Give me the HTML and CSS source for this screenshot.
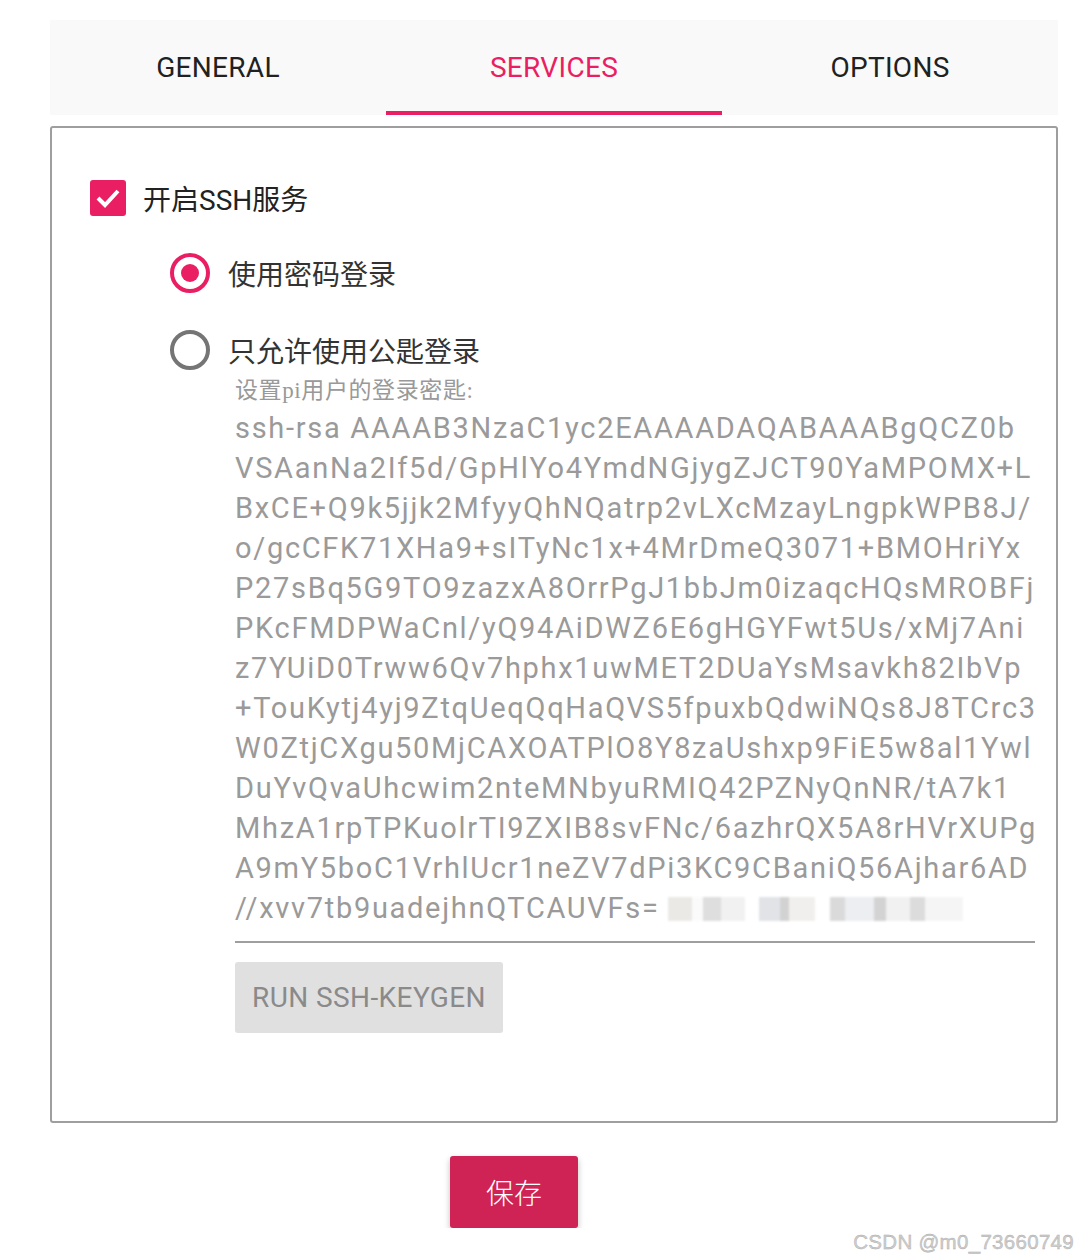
FILE: index.html
```html
<!DOCTYPE html>
<html lang="zh-CN">
<head>
    <meta charset="UTF-8">
    <meta name="viewport" content="width=device-width, initial-scale=1.0">
    <title>Raspberry Pi Imager - Services</title>
    <link rel="stylesheet" href="styles.css">
</head>
<body>
    <div class="wrap">
        <div class="tabs">
            <div class="tab">GENERAL</div>
            <div class="tab active">SERVICES</div>
            <div class="tab">OPTIONS</div>
        </div>

        <div class="panel">
            <label class="check-row">
                <span class="checkbox">
                    <svg width="26" height="20" viewBox="0 0 26 20"><path d="M3 10 L10 17 L23 3" fill="none" stroke="#fff" stroke-width="4"/></svg>
                </span>
                <span class="check-label">开启SSH服务</span>
            </label>

            <div class="radio-row first">
                <span class="radio on"></span>
                <span class="radio-label">使用密码登录</span>
            </div>
            <div class="radio-row">
                <span class="radio"></span>
                <span class="radio-label">只允许使用公匙登录</span>
            </div>

            <div class="key-block">
                <div class="hint">设置pi用户的登录密匙:</div>
                <div class="key-text">ssh-rsa AAAAB3NzaC1yc2EAAAADAQABAAABgQCZ0b<br>VSAanNa2If5d/GpHlYo4YmdNGjygZJCT90YaMPOMX+L<br>BxCE+Q9k5jjk2MfyyQhNQatrp2vLXcMzayLngpkWPB8J/<br>o/gcCFK71XHa9+sITyNc1x+4MrDmeQ3071+BMOHriYx<br>P27sBq5G9TO9zazxA8OrrPgJ1bbJm0izaqcHQsMROBFj<br>PKcFMDPWaCnl/yQ94AiDWZ6E6gHGYFwt5Us/xMj7Ani<br>z7YUiD0Trww6Qv7hphx1uwMET2DUaYsMsavkh82IbVp<br>+TouKytj4yj9ZtqUeqQqHaQVS5fpuxbQdwiNQs8J8TCrc3<br>W0ZtjCXgu50MjCAXOATPlO8Y8zaUshxp9FiE5w8al1Ywl<br>DuYvQvaUhcwim2nteMNbyuRMIQ42PZNyQnNR/tA7k1<br>MhzA1rpTPKuolrTI9ZXIB8svFNc/6azhrQX5A8rHVrXUPg<br>A9mY5boC1VrhlUcr1neZV7dPi3KC9CBaniQ56Ajhar6AD<br>//xvv7tb9uadejhnQTCAUVFs= <span class="blur"></span></div>
                <div class="underline"></div>
                <button class="keygen">RUN SSH-KEYGEN</button>
            </div>
        </div>

        <button class="save">保存</button>
    </div>

    <div class="watermark">CSDN @m0_73660749</div>
</body>
</html>
```

FILE: styles.css
```css
body {
    margin: 0;
    background: #fff;
    font-family: Roboto, "Noto Sans CJK SC", sans-serif;
    color: #212121;
}

.wrap {
    width: 1008px;
    margin-left: 50px;
    padding-top: 20px;
}

.tabs {
    display: flex;
    height: 95px;
    background-color: #f9f9f9;
}

.tab {
    flex: 1;
    display: flex;
    align-items: center;
    justify-content: center;
    font-size: 28px;
    letter-spacing: 0.3px;
    box-sizing: border-box;
    color: #212121;
}

.tab.active {
    color: #e91e63;
    border-bottom: 4px solid #e91e63;
    padding-top: 4px;
}

.panel {
    margin-top: 11px;
    height: 997px;
    box-sizing: border-box;
    border: 2px solid #9e9e9e;
    border-radius: 3px;
    padding: 52px 22px 0 38px;
}

.check-row {
    display: flex;
    align-items: center;
    height: 36px;
}

.checkbox {
    width: 36px;
    height: 36px;
    border-radius: 3px;
    background-color: #e91e63;
    display: flex;
    align-items: center;
    justify-content: center;
}

.check-label {
    margin-left: 17px;
    font-size: 28px;
    color: #222;
}

.radio-row {
    display: flex;
    align-items: center;
    height: 40px;
    margin-left: 80px;
    margin-top: 37px;
}

.radio {
    width: 40px;
    height: 40px;
    box-sizing: border-box;
    border: 4px solid #757575;
    border-radius: 50%;
    position: relative;
}

.radio.on {
    border-color: #e91e63;
}

.radio.on::after {
    content: "";
    position: absolute;
    left: 7px;
    top: 7px;
    width: 18px;
    height: 18px;
    border-radius: 50%;
    background-color: #e91e63;
}

.radio-label {
    margin-left: 18px;
    font-size: 28px;
    color: #333;
}

.key-block {
    margin-left: 145px;
    width: 800px;
}

.hint {
    margin-top: 7px;
    font-family: "Liberation Serif", "Noto Sans CJK SC", serif;
    font-size: 23px;
    letter-spacing: 0.6px;
    color: #999;
    line-height: 28px;
}

.key-text {
    margin-top: 3px;
    font-size: 29px;
    letter-spacing: 1.7px;
    line-height: 40px;
    color: #9a9a9a;
    white-space: nowrap;
}

.blur {
    display: inline-block;
    width: 295px;
    height: 24px;
    vertical-align: -3px;
    background:
        linear-gradient(90deg, #e6e4e1 0 8%, #fafafa 8% 12%, #d6d6d6 12% 18%, #eee 18% 26%, #fff 26% 31%, #dadde2 31% 38%, #c8c8c8 38% 41%, #eeecea 41% 50%, #fff 50% 55%, #d2d2d2 55% 60%, #e8eaee 60% 70%, #c9c9c9 70% 74%, #eee 74% 82%, #d4d4d4 82% 87%, #f3f3f3 87% 100%);
    opacity: 0.8;
    filter: blur(1px);
}

.underline {
    margin-top: 13px;
    height: 2px;
    background-color: #9e9e9e;
}

.keygen {
    margin-top: 19px;
    width: 268px;
    height: 71px;
    border: none;
    border-radius: 3px;
    background-color: #e0e0e0;
    color: #8a8a8a;
    font-family: Roboto, sans-serif;
    font-size: 28px;
    letter-spacing: 0.4px;
    padding: 0;
}

.save {
    display: block;
    margin: 33px 0 0 400px;
    width: 128px;
    height: 72px;
    border: none;
    border-radius: 3px;
    background-color: #cf2355;
    color: #fff;
    font-family: "Noto Sans CJK SC", sans-serif;
    font-size: 28px;
    font-weight: 300;
    box-shadow: 0 3px 6px rgba(0, 0, 0, 0.25);
}

.watermark {
    position: absolute;
    right: 4px;
    top: 1230px;
    font-family: "Liberation Sans", sans-serif;
    font-size: 20.5px;
    letter-spacing: 0.3px;
    color: #cfcfcf;
    -webkit-text-stroke: 0.4px #aaa;
}
```
